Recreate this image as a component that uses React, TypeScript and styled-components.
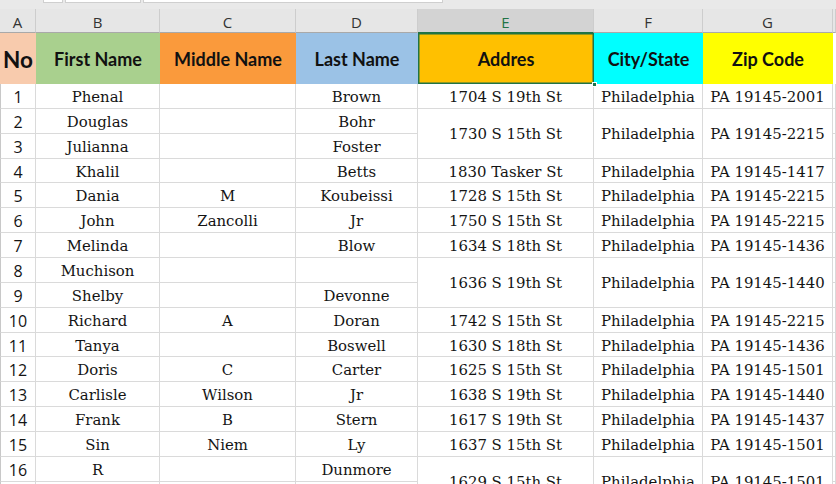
import React from "react";
import styled, { createGlobalStyle } from "styled-components";

const GlobalStyle = createGlobalStyle`
  html, body { margin: 0; padding: 0; background: #ffffff; overflow: hidden; }
  body { width: 836px; height: 484px; }
`;

const Sheet = styled.div`
  width: 836px;
  height: 484px;
  overflow: hidden;
  background: #ffffff;
  display: flex;
  flex-direction: column;
`;

const TopStrip = styled.div`
  height: 9px;
  flex: none;
  background: #e9e9e9;
  display: flex;
  align-items: flex-start;
  gap: 2px;
  padding-left: 43px;
  box-sizing: border-box;
`;

const StripBox = styled.div<{ $w: number }>`
  width: ${(p) => p.$w}px;
  height: 3px;
  background: #ffffff;
  border: 1px solid #cfcfcf;
  border-top: none;
  box-sizing: border-box;
`;

const Grid = styled.div`
  display: grid;
  grid-template-columns: 36px 124px 136px 122px 176px 109px 130px 1fr;
  grid-template-rows: 24px 51px repeat(17, 24.87px);
`;

const ColHead = styled.div<{ $sel?: boolean }>`
  display: flex;
  align-items: center;
  justify-content: center;
  padding-top: 2px;
  background: ${(p) => (p.$sel ? "#d3d3d3" : "#e6e6e6")};
  color: ${(p) => (p.$sel ? "#217346" : "#333333")};
  font-family: "Open Sans", "Noto Sans", sans-serif;
  font-size: 15px;
  border-right: 1px solid #cdcdcd;
  border-bottom: 1px solid ${(p) => (p.$sel ? "#217346" : "#a9a9a9")};
  box-sizing: border-box;
`;

const Title = styled.div<{ $bg: string; $big?: boolean; $sel?: boolean }>`
  position: relative;
  display: flex;
  align-items: center;
  justify-content: center;
  background: ${(p) => p.$bg};
  font-family: Lato, "Open Sans", sans-serif;
  font-weight: 700;
  font-size: ${(p) => (p.$big ? "22.5px" : "18px")};
  color: #111111;
  box-sizing: border-box;
  padding-top: 1px;
  box-shadow: ${(p) => (p.$sel ? "inset 0 0 0 1.5px #217346" : "none")};
`;

const Handle = styled.div`
  position: absolute;
  right: -3px;
  bottom: -3px;
  width: 5px;
  height: 5px;
  background: #217346;
  border: 1px solid #ffffff;
  box-sizing: border-box;
  z-index: 2;
`;

const Cell = styled.div<{ $num?: boolean }>`
  display: flex;
  align-items: center;
  justify-content: center;
  border-right: 1px solid #dadada;
  border-bottom: 1px solid #dadada;
  box-sizing: border-box;
  white-space: nowrap;
  overflow: hidden;
  color: #141414;
  font-family: ${(p) =>
    p.$num ? '"Open Sans", "Noto Sans", sans-serif' : '"DejaVu Serif", serif'};
  font-size: ${(p) => (p.$num ? "16px" : "14.9px")};
  padding-top: 2px;
`;

const FirstCell = styled(Cell)`
  border-left: 1px solid #c8c8c8;
`;

type Row = {
  first: string;
  middle: string;
  last: string;
  addr?: string;
  zip?: string;
  span?: number;
};

const rows: Row[] = [
  { first: "Phenal", middle: "", last: "Brown", addr: "1704 S 19th St", zip: "PA 19145-2001" },
  { first: "Douglas", middle: "", last: "Bohr", addr: "1730 S 15th St", zip: "PA 19145-2215", span: 2 },
  { first: "Julianna", middle: "", last: "Foster" },
  { first: "Khalil", middle: "", last: "Betts", addr: "1830 Tasker St", zip: "PA 19145-1417" },
  { first: "Dania", middle: "M", last: "Koubeissi", addr: "1728 S 15th St", zip: "PA 19145-2215" },
  { first: "John", middle: "Zancolli", last: "Jr", addr: "1750 S 15th St", zip: "PA 19145-2215" },
  { first: "Melinda", middle: "", last: "Blow", addr: "1634 S 18th St", zip: "PA 19145-1436" },
  { first: "Muchison", middle: "", last: "", addr: "1636 S 19th St", zip: "PA 19145-1440", span: 2 },
  { first: "Shelby", middle: "", last: "Devonne" },
  { first: "Richard", middle: "A", last: "Doran", addr: "1742 S 15th St", zip: "PA 19145-2215" },
  { first: "Tanya", middle: "", last: "Boswell", addr: "1630 S 18th St", zip: "PA 19145-1436" },
  { first: "Doris", middle: "C", last: "Carter", addr: "1625 S 15th St", zip: "PA 19145-1501" },
  { first: "Carlisle", middle: "Wilson", last: "Jr", addr: "1638 S 19th St", zip: "PA 19145-1440" },
  { first: "Frank", middle: "B", last: "Stern", addr: "1617 S 19th St", zip: "PA 19145-1437" },
  { first: "Sin", middle: "Niem", last: "Ly", addr: "1637 S 15th St", zip: "PA 19145-1501" },
  { first: "R", middle: "", last: "Dunmore", addr: "1629 S 15th St", zip: "PA 19145-1501", span: 2 },
  { first: "", middle: "", last: "" },
];

const letters = ["A", "B", "C", "D", "E", "F", "G", ""];

export default function App() {
  return (
    <Sheet>
      <GlobalStyle />
      <TopStrip>
        <StripBox $w={20} />
        <StripBox $w={76} />
        <StripBox $w={300} />
      </TopStrip>
      <Grid>
        {letters.map((l, i) => (
          <ColHead key={"h" + i} $sel={l === "E"}>
            {l}
          </ColHead>
        ))}
        <Title $bg="#f8cbad" $big>No</Title>
        <Title $bg="#a9d08e">First Name</Title>
        <Title $bg="#fa9a3c">Middle Name</Title>
        <Title $bg="#9bc2e6">Last Name</Title>
        <Title $bg="#ffc000" $sel>
          Addres
          <Handle />
        </Title>
        <Title $bg="#00ffff">City/State</Title>
        <Title $bg="#ffff00">Zip Code</Title>
        <Title $bg="#ffffff" />
        {rows.map((r, i) => {
          const rowStart = i + 3;
          const span = r.span ?? 1;
          const place = { gridRow: `${rowStart} / span ${span}` };
          return (
            <React.Fragment key={i}>
              <FirstCell $num style={{ gridRow: rowStart, gridColumn: 1 }}>
                {i < 16 ? i + 1 : ""}
              </FirstCell>
              <Cell style={{ gridRow: rowStart, gridColumn: 2 }}>{r.first}</Cell>
              <Cell style={{ gridRow: rowStart, gridColumn: 3 }}>{r.middle}</Cell>
              <Cell style={{ gridRow: rowStart, gridColumn: 4 }}>{r.last}</Cell>
              {r.addr !== undefined && (
                <>
                  <Cell style={{ ...place, gridColumn: 5 }}>{r.addr}</Cell>
                  <Cell style={{ ...place, gridColumn: 6 }}>Philadelphia</Cell>
                  <Cell style={{ ...place, gridColumn: 7 }}>{r.zip}</Cell>
                </>
              )}
              <Cell style={{ gridRow: rowStart, gridColumn: 8 }} />
            </React.Fragment>
          );
        })}
      </Grid>
    </Sheet>
  );
}
